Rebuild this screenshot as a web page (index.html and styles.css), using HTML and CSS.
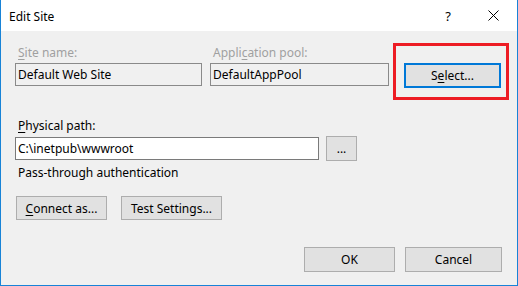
FILE: index.html
```html
<!DOCTYPE html>
<html lang="en">
<head>
    <meta charset="utf-8" />
    <title>Edit Site</title>
    <link rel="stylesheet" href="styles.css">
</head>
<body>
    <div class="window">
        <div class="titlebar">
            <span class="title">Edit Site</span>
            <span class="help">?</span>
            <span class="close">
                <svg width="11" height="11" viewBox="0 0 11 11">
                    <path d="M0.5 0.5 L10.5 10.5 M10.5 0.5 L0.5 10.5" stroke="#000" stroke-width="1" fill="none" />
                </svg>
            </span>
        </div>

        <div class="content">
            <div class="top-row">
                <div class="field site-field">
                    <label class="label disabled"><u>S</u>ite name:</label>
                    <div class="input readonly">Default Web Site</div>
                </div>
                <div class="field pool-field">
                    <label class="label disabled">Appli<u>c</u>ation pool:</label>
                    <div class="input readonly">DefaultAppPool</div>
                </div>
                <div class="highlight">
                    <button class="button default select-btn">S<u>e</u>lect...</button>
                </div>
            </div>

            <div class="path-section">
                <label class="label"><u>P</u>hysical path:</label>
                <div class="path-row">
                    <div class="input path-input">C:\inetpub\wwwroot</div>
                    <button class="button browse-btn">...</button>
                </div>
                <div class="auth-text">Pass-through authentication</div>
            </div>

            <div class="actions">
                <button class="button connect-btn"><u>C</u>onnect as...</button>
                <button class="button test-btn">Test Settings...</button>
            </div>

            <div class="footer">
                <button class="button ok-btn">OK</button>
                <button class="button cancel-btn">Cancel</button>
            </div>
        </div>
    </div>
</body>
</html>
```

FILE: styles.css
```css
* {
    box-sizing: border-box;
}
body {
    margin: 0;
    background: #ffffff;
    font-family: "Noto Sans", "Open Sans", Arial, sans-serif;
    font-size: 12px;
    color: #000000;
}
u {
    text-decoration: underline;
    text-underline-offset: 2px;
}
.window {
    width: 518px;
    height: 286px;
    border: 1px solid #1883d7;
    border-top: none;
    display: flex;
    flex-direction: column;
}
.titlebar {
    height: 31px;
    background: #ffffff;
    display: flex;
    align-items: center;
    padding-left: 8px;
}
.title {
    font-size: 12px;
    flex: 1;
    margin-top: 1px;
}
.help {
    width: 46px;
    text-align: center;
    font-size: 13px;
}
.close {
    width: 46px;
    display: flex;
    justify-content: center;
    padding-right: 2px;
}
.content {
    flex: 1;
    background: #f0f0f0;
    padding: 12px 15px 0 14px;
    display: flex;
    flex-direction: column;
}
.top-row {
    display: flex;
    align-items: flex-start;
    margin-right: -8px;
}
.field {
    display: flex;
    flex-direction: column;
    flex-shrink: 0;
    padding-top: 2px;
}
.site-field {
    width: 187px;
}
.pool-field {
    width: 179px;
    margin-left: 8px;
}
.label {
    display: block;
    line-height: 16px;
    padding-left: 3px;
    margin-bottom: 2px;
}
.label.disabled {
    color: #a0a0a0;
}
.input {
    height: 23px;
    border: 1px solid #7a7a7a;
    background: #ffffff;
    line-height: 21px;
    padding-left: 2px;
    white-space: nowrap;
    overflow: hidden;
}
.input.readonly {
    background: #f0f0f0;
    border-color: #8a8a8a;
}
.highlight {
    flex-shrink: 0;
    width: 116px;
    height: 57px;
    margin-left: 4px;
    border: 3px solid #ed1c24;
    padding: 17px 5px 0 8px;
}
.button {
    font-family: inherit;
    font-size: 12px;
    color: #000000;
    background: #e1e1e1;
    border: 1px solid #adadad;
    height: 24px;
    padding: 0;
    margin: 0;
}
.button.default {
    border: 2px solid #0078d7;
}
.select-btn {
    width: 97px;
    height: 25px;
}
.path-section {
    margin-top: 18px;
}
.path-row {
    display: flex;
    align-items: center;
    margin-top: 1px;
}
.path-input {
    width: 304px;
}
.browse-btn {
    width: 31px;
    height: 25px;
    margin-left: 7px;
    line-height: 20px;
}
.auth-text {
    padding-left: 3px;
    margin-top: 4px;
    line-height: 16px;
}
.actions {
    display: flex;
    gap: 14px;
    margin-top: 15px;
    padding-left: 1px;
}
.connect-btn {
    width: 91px;
}
.test-btn {
    width: 101px;
}
.footer {
    display: flex;
    justify-content: flex-end;
    gap: 10px;
    margin-top: 27px;
}
.ok-btn {
    width: 91px;
    height: 25px;
}
.cancel-btn {
    width: 97px;
    height: 25px;
}
```
